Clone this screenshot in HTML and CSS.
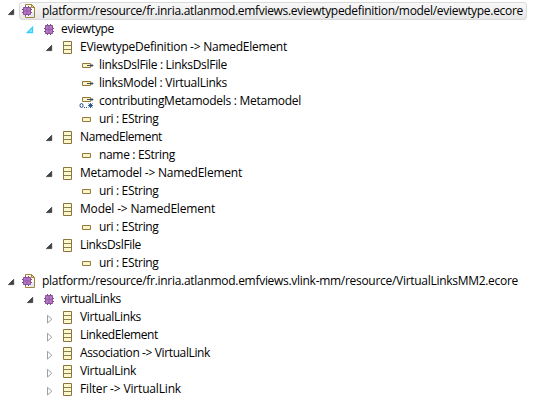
FILE: index.html
```html
<!DOCTYPE html>
<html lang="en">
<head>
<meta charset="utf-8">
<title>Ecore model tree</title>
<link rel="stylesheet" href="styles.css">
</head>
<body>
<svg class="symbols" aria-hidden="true">
  <symbol id="open" viewBox="0 0 9 18"><path d="M6.700 7.300v5.300H1.400z" fill="#444" stroke="#2b2b2b" stroke-width=".7"/></symbol>
  <symbol id="hot" viewBox="0 0 9 18"><path d="M6.500 7.300v5.200H1.500z" fill="#9ceafe" stroke="#35cdfa" stroke-width="1.300"/></symbol>
  <symbol id="closed" viewBox="0 0 9 18"><path d="M2.500 7.300v7.800l4.300-3.900z" fill="#fff" stroke="#a0a0a0"/></symbol>
  <symbol id="package" viewBox="0 0 16 16">
    <path d="M7 3h1v11H7zM10 3h1v11h-1zM4 7h10v1H4zM4 10h10v1H4z" fill="#7d4590"/>
    <path d="M5.500 4.500h7v8h-7z" fill="#b478c4" stroke="#8a529b"/>
    <path d="M9 5v7M6 8.500h6" stroke="#9559a6"/>
  </symbol>
  <symbol id="file" viewBox="0 0 16 16">
    <path d="M4.500 1.500h6l3 3v10h-9z" fill="#fffdf0" stroke="#a58338"/>
    <path d="M10.500 1.500v3h3z" fill="#e9d59a" stroke="#a58338"/>
    <path d="M8 14l5-6v6z" fill="#dde9f6"/>
    <path d="M4 3h1v10H4zM7 3h1v10H7zM1 6h10v1H1zM1 9h10v1H1z" fill="#7d4590"/>
    <path d="M2.500 4.500h7v7h-7z" fill="#b478c4" stroke="#8a529b"/>
    <path d="M6 5v6M3 8h6" stroke="#9559a6"/>
  </symbol>
  <symbol id="class" viewBox="0 0 16 16">
    <path d="M4.500 2.500h8v12h-8z" fill="#fbf8ce" stroke="#8d743e"/><path d="M5 6.500h7M5 10.500h7" stroke="#8d8050"/>
  </symbol>
  <symbol id="attribute" viewBox="0 0 16 16"><path d="M4.500 6.500h8v4h-8z" fill="#fbf5c6" stroke="#93773a"/></symbol>
  <symbol id="reference" viewBox="0 0 16 16">
    <path d="M4.500 6.500h8v4h-8z" fill="#fbf5c6" stroke="#93773a"/><path d="M9 8.500h6" stroke="#3c5063"/><path d="M13.500 6.800v3.400l2.200-1.700z" fill="#3c5063"/>
  </symbol>
  <symbol id="many" viewBox="0 0 16 16">
    <path d="M4.500 4.500h8v4h-8z" fill="#fbf5c6" stroke="#93773a"/><path d="M9 6.500h6" stroke="#3c5063"/><path d="M13.500 4.800v3.400l2.200-1.700z" fill="#3c5063"/>
    <ellipse cx="3.500" cy="12.500" rx="1.500" ry="2" fill="none" stroke="#214a8c"/>
    <path d="M6 14h1v1H6zM8 14h1v1H8z" fill="#214a8c"/><path d="M10 12.500h5M12.500 10v5M10.500 10.500l4 4M14.500 10.500l-4 4" stroke="#214a8c" stroke-width=".9"/>
  </symbol>
</svg>
<main class="tree" id="tree"></main>
<script src="tree.js"></script>
</body>
</html>
```
FILE: styles.css
```css
body {
  margin: 0;
  background: #fff;
  color: #000;
  font: 12px/18px "Open Sans", "Noto Sans", sans-serif;
}
.symbols { position: absolute; width: 0; height: 0; }
.tree { padding-top: 2px; }
.row {
  display: flex;
  align-items: center;
  height: 18px;
  padding-left: 7px;
}
.level-1 { padding-left: 26px; }
.level-2 { padding-left: 45px; }
.level-3 { padding-left: 64px; }
.twistie { flex: none; width: 9px; height: 18px; margin-right: 3px; }
.item {
  display: flex;
  align-items: center;
  box-sizing: border-box;
  height: 18px;
  padding: 0 3px 0 1px;
  border: 1px solid transparent;
  border-radius: 3px;
}
.selected .item {
  border-color: #d9d9d9;
  background: linear-gradient(#f9f9f9, #e6e6e6);
}
.icon { flex: none; width: 16px; height: 16px; margin-right: 5px; }
.label { white-space: pre; }
```
FILE: tree.js
```js
// level, twistie, icon, label, label width
const rows = [
  [0, "open", "file", "platform:/resource/fr.inria.atlanmod.emfviews.eviewtypedefinition/model/eviewtype.ecore", 481],
  [1, "hot", "package", "eviewtype", 53],
  [2, "open", "class", "EViewtypeDefinition -> NamedElement", 207],
  [3, "", "reference", "linksDslFile : LinksDslFile", 128],
  [3, "", "reference", "linksModel : VirtualLinks", 128],
  [3, "", "many", "contributingMetamodels : Metamodel", 202],
  [3, "", "attribute", "uri : EString", 59.5],
  [2, "open", "class", "NamedElement", 82],
  [3, "", "attribute", "name : EString", 76],
  [2, "open", "class", "Metamodel -> NamedElement", 162],
  [3, "", "attribute", "uri : EString", 59.5],
  [2, "open", "class", "Model -> NamedElement", 135],
  [3, "", "attribute", "uri : EString", 59.5],
  [2, "open", "class", "LinksDslFile", 61],
  [3, "", "attribute", "uri : EString", 59.5],
  [0, "open", "file", "platform:/resource/fr.inria.atlanmod.emfviews.vlink-mm/resource/VirtualLinksMM2.ecore", 476],
  [1, "open", "package", "virtualLinks", 60],
  [2, "closed", "class", "VirtualLinks", 61],
  [2, "closed", "class", "LinkedElement", 78],
  [2, "closed", "class", "Association -> VirtualLink", 130],
  [2, "closed", "class", "VirtualLink", 56],
  [2, "closed", "class", "Filter -> VirtualLink", 101]
];
const tree = document.getElementById("tree");
rows.forEach(([level, twistie, icon, text, width], index) => {
  const row = document.createElement("div");
  row.className = `row level-${level}${index === 0 ? " selected" : ""}`;
  row.innerHTML = `<svg class="twistie">${twistie ? `<use href="#${twistie}"/>` : ""}</svg>` +
    `<div class="item"><svg class="icon"><use href="#${icon}"/></svg><span class="label"></span></div>`;
  const label = row.querySelector(".label");
  label.textContent = text;
  tree.append(row);
  const spacing = (width - label.getBoundingClientRect().width) / text.length;
  label.style.letterSpacing = `${spacing}px`;
});
```
